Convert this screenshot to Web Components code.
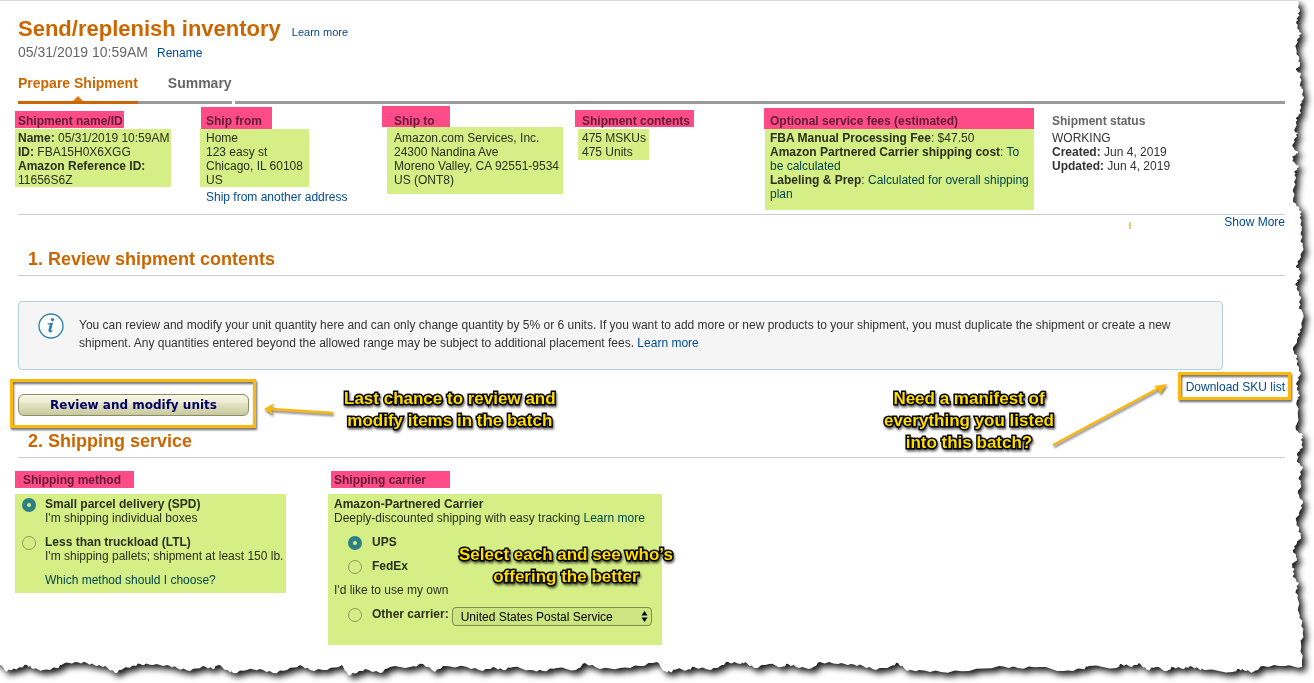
<!DOCTYPE html>
<html lang="en">
<head>
<meta charset="utf-8">
<meta name="viewport" content="width=device-width, initial-scale=1">
<title>Send/replenish inventory</title>
<style>
  body {
    margin: 0;
    background: #fff;
    color: #333;
    font: 12px/14px "Liberation Sans", Arial, sans-serif;
  }

  a {
    color: #004b91;
    text-decoration: none;
  }

  .name { --head-mark: -3px -1px 0 -3px; --body-mark: -2px -2px 0 -3px; }
  .from { --head-mark: -7px -10px -1px -5px; --body-mark: -2px -6px 0 -6px; }
  .to { --head-mark: -8px -15px 1px -12px; --body-mark: -4px -4px -7px -7px; }
  .contents { --head-mark: -4px -4px 1px -7px; --body-mark: -2px -3px -1px -4px; }
  .fees { --head-mark: -6px -76px -1px -6px; --body-mark: -2px 0 -9px -5px; }
</style>
</head>
<body>
<torn-page>
  <page-title>
    Send/replenish inventory
    <a slot="help" href="#">Learn more</a>
    <span slot="date">05/31/2019 10:59AM</span>
    <a slot="rename" href="#">Rename</a>
  </page-title>

  <tab-bar tabs="Prepare Shipment,Summary"></tab-bar>

  <shipment-summary>
    <info-cell class="name" marked>
      <span slot="head">Shipment name/ID</span>
      <b>Name:</b> 05/31/2019 10:59AM<br>
      <b>ID:</b> FBA15H0X6XGG<br>
      <b>Amazon Reference ID:</b><br>
      11656S6Z
    </info-cell>
    <info-cell class="from" marked>
      <span slot="head">Ship from</span>
      Home<br>123 easy st<br>Chicago, IL 60108<br>US
      <a slot="after" href="#">Ship from another address</a>
    </info-cell>
    <info-cell class="to" marked>
      <span slot="head">Ship to</span>
      Amazon.com Services, Inc.<br>24300 Nandina Ave<br>Moreno Valley, CA 92551-9534<br>US (ONT8)
    </info-cell>
    <info-cell class="contents" marked>
      <span slot="head">Shipment contents</span>
      475 MSKUs<br>475 Units
    </info-cell>
    <info-cell class="fees" marked>
      <span slot="head">Optional service fees (estimated)</span>
      <b>FBA Manual Processing Fee</b>: $47.50<br>
      <b>Amazon Partnered Carrier shipping cost</b>: <a href="#">To be calculated</a><br>
      <b>Labeling &amp; Prep</b>: <a href="#">Calculated for overall shipping plan</a>
    </info-cell>
    <info-cell>
      <span slot="head">Shipment status</span>
      WORKING<br>
      <b>Created:</b> Jun 4, 2019<br>
      <b>Updated:</b> Jun 4, 2019
    </info-cell>
    <a slot="more" href="#">Show More</a>
  </shipment-summary>

  <section-title>1. Review shipment contents</section-title>
  <info-alert>
    You can review and modify your unit quantity here and can only change quantity by 5% or 6 units. If you want to add more or new products to your shipment, you must duplicate the shipment or create a new shipment. Any quantities entered beyond the allowed range may be subject to additional placement fees. <a href="#">Learn more</a>
  </info-alert>
  <review-actions>
    <a slot="download" href="#">Download SKU list</a>
  </review-actions>

  <section-title>2. Shipping service</section-title>
  <shipping-service></shipping-service>
</torn-page>

<script>
// Sheet of paper with a ripped right and bottom edge
class TornPage extends HTMLElement {
  constructor() {
    super();
    this.attachShadow({mode: 'open'});
  }

  connectedCallback() {
    const right = [
      [1297, 0], [1300, 10], [1298, 17], [1296, 23], [1299, 30], [1301, 34], [1297, 40], [1296, 48], [1299, 60],
      [1300, 65], [1296, 70], [1301, 74], [1300, 86], [1303, 89], [1303, 100], [1300, 105], [1301, 113],
      [1297, 117], [1296, 123], [1295, 132], [1298, 133], [1294, 140], [1293, 147], [1298, 153], [1292, 157],
      [1294, 162], [1299, 167], [1294, 172], [1296, 177], [1294, 187], [1293, 202], [1299, 207], [1301, 213],
      [1300, 218], [1302, 227], [1301, 240], [1303, 247], [1301, 257], [1296, 266], [1300, 271], [1300, 278],
      [1296, 283], [1297, 290], [1301, 297], [1299, 307], [1303, 313], [1302, 327], [1299, 333], [1297, 340],
      [1293, 350], [1297, 357], [1297, 365], [1301, 373], [1297, 382], [1297, 390], [1300, 395], [1297, 400],
      [1298, 417], [1296, 430], [1303, 435], [1301, 440], [1303, 447], [1298, 452], [1297, 462], [1303, 467],
      [1299, 477], [1301, 485], [1298, 493], [1303, 503], [1299, 513], [1296, 520], [1299, 530], [1301, 537],
      [1297, 543], [1293, 550], [1297, 559], [1292, 565], [1294, 570], [1293, 577], [1299, 583], [1296, 590],
      [1298, 600], [1299, 613], [1302, 623], [1303, 635], [1301, 643], [1302, 660]
    ];
    const bottom = [
      [1302, 667], [1285, 666], [1263, 666], [1253, 672], [1246, 671], [1239, 669], [1233, 672], [1205, 670],
      [1199, 669], [1190, 666], [1184, 669], [1173, 667], [1167, 671], [1156, 667], [1147, 670], [1139, 663],
      [1132, 667], [1121, 664], [1117, 668], [1089, 666], [1083, 669], [1063, 671], [1040, 667], [1018, 668],
      [999, 666], [969, 671], [941, 672], [919, 670], [907, 671], [898, 663], [891, 666], [876, 670],
      [863, 666], [851, 664], [838, 664], [820, 662], [812, 668], [799, 668], [788, 664], [782, 667],
      [769, 664], [754, 668], [745, 662], [741, 664], [728, 662], [720, 666], [711, 670], [694, 667],
      [687, 670], [677, 669], [670, 672], [664, 671], [657, 662], [640, 666], [620, 668], [600, 669],
      [585, 663], [576, 670], [557, 668], [543, 671], [530, 670], [513, 667], [503, 670], [493, 667],
      [483, 671], [467, 667], [443, 666], [435, 672], [423, 664], [410, 667], [390, 667], [380, 673],
      [365, 669], [357, 673], [348, 675], [342, 665], [327, 670], [310, 670], [300, 665], [287, 670],
      [273, 673], [260, 669], [247, 670], [233, 673], [227, 670], [218, 665], [213, 669], [203, 666],
      [190, 671], [177, 668], [167, 665], [153, 665], [140, 664], [132, 666], [123, 669], [115, 673],
      [105, 666], [97, 666], [87, 663], [75, 662], [63, 664], [57, 668], [43, 670], [33, 669], [27, 665],
      [18, 668], [12, 670], [5, 671], [3, 667]
    ];
    const points = [[-12, 656], [-12, 0]].concat(this.fray(right, 0), this.fray(bottom, 1));

    this.shadowRoot.innerHTML = `
      <style>
        :host {
          display: block;
          position: relative;
          box-sizing: border-box;
          min-height: 100vh;
          padding: 16px 29px 38px 18px;
          overflow: hidden;
        }

        svg {
          position: absolute;
          inset: 0;
          width: 100%;
          height: 100%;
          z-index: -1;
        }

        polygon {
          fill: #fff;
          filter: drop-shadow(4px 4px 3px rgba(0, 0, 0, 0.9));
        }
      </style>
      <svg viewBox="0 0 1314 683" preserveAspectRatio="none" aria-hidden="true">
        <polygon points="${points.join(' ')}"/>
        <path d="M0 .5H1297" stroke="#d5d9d9"/>
      </svg>
      <slot></slot>
    `;
  }

  // adds small teeth between the main points of an edge
  fray(edge, axis) {
    const out = [];
    edge.forEach((p, i) => {
      out.push(p);
      const q = edge[i + 1];
      if (!q) return;
      for (let k = 1; k < 4; k++) {
        const tooth = [p[0] + (q[0] - p[0]) * k / 4, p[1] + (q[1] - p[1]) * k / 4];
        tooth[axis] += (i * 5 + k * 2) % 3 - 1;
        out.push(tooth);
      }
    });
    return out;
  }
}

class PageTitle extends HTMLElement {
  constructor() {
    super();
    this.attachShadow({mode: 'open'}).innerHTML = `
      <style>
        :host {
          display: block;
        }

        .row {
          display: flex;
          align-items: baseline;
          gap: 11px;
        }

        h1 {
          margin: 0;
          color: #cc6600;
          font-size: 22px;
          line-height: 26px;
        }

        .help {
          font-size: 11px;
        }

        .date {
          gap: 9px;
          color: #666;
          font-size: 14px;
          line-height: 20px;
        }

        .rename {
          font-size: 12px;
        }
      </style>
      <div class="row"><h1><slot></slot></h1><span class="help"><slot name="help"></slot></span></div>
      <div class="row date"><slot name="date"></slot><span class="rename"><slot name="rename"></slot></span></div>
    `;
  }
}

class TabBar extends HTMLElement {
  constructor() {
    super();
    this.attachShadow({mode: 'open'});
  }

  connectedCallback() {
    const tabs = this.getAttribute('tabs').split(',');
    this.shadowRoot.innerHTML = `
      <style>
        :host {
          display: block;
          margin-top: 11px;
        }

        nav {
          display: flex;
        }

        a {
          position: relative;
          padding: 0 0 9px 30px;
          border-bottom: 3px solid #999;
          color: #666;
          font-size: 14px;
          font-weight: bold;
          line-height: 18px;
          text-decoration: none;
        }

        a:first-child {
          padding-left: 0;
          border-color: #cc6600;
          color: #cc6600;
        }

        a:first-child::after {
          content: "";
          position: absolute;
          left: 50%;
          bottom: 0;
          margin-left: -5px;
          border: 5px solid transparent;
          border-top: 0;
          border-bottom-color: #e47911;
        }

        .rest {
          flex: 1;
          margin-left: 3px;
          border-bottom: 3px solid #999;
        }
      </style>
      <nav>${tabs.map(tab => `<a href="#">${tab}</a>`).join('')}<span class="rest"></span></nav>
    `;
  }
}

class ShipmentSummary extends HTMLElement {
  constructor() {
    super();
    this.attachShadow({mode: 'open'}).innerHTML = `
      <style>
        :host {
          display: block;
        }

        .cells {
          display: grid;
          grid-template-columns: repeat(4, 188fr) 282fr 233fr;
          padding: 10px 0;
          border-bottom: 1px solid #ccc;
        }

        .more {
          display: flex;
          justify-content: flex-end;
          gap: 92px;
        }

        svg {
          margin-top: 6px;
        }
      </style>
      <div class="cells"><slot></slot></div>
      <div class="more">
        <svg width="4" height="8" aria-hidden="true">
          <path d="M1 4h2v4h-2z" fill="#ccc"/><path d="M2 1l1 4h-2z" fill="#f7b011" stroke="#f7c95a"/>
        </svg>
        <slot name="more"></slot>
      </div>
    `;
  }
}

// Heading with text under it; "marked" paints both with a highlighter
class InfoCell extends HTMLElement {
  constructor() {
    super();
    this.attachShadow({mode: 'open'}).innerHTML = `
      <style>
        :host {
          display: block;
        }

        .head,
        .body {
          position: relative;
          width: fit-content;
        }

        .head {
          margin-bottom: 3px;
          color: #666;
          font-weight: bold;
        }

        .body {
          max-width: 264px;
        }

        :host([marked]) .head::after,
        :host([marked]) .body::after {
          content: "";
          position: absolute;
          inset: var(--head-mark);
          background: #ff4b88;
          mix-blend-mode: multiply;
          pointer-events: none;
        }

        :host([marked]) .body::after {
          inset: var(--body-mark);
          background: #d5ef86;
        }

        .after {
          margin-top: 3px;
        }
      </style>
      <div class="head"><slot name="head"></slot></div>
      <div class="body"><slot></slot></div>
      <div class="after"><slot name="after"></slot></div>
    `;
  }
}

class SectionTitle extends HTMLElement {
  constructor() {
    super();
    this.attachShadow({mode: 'open'}).innerHTML = `
      <style>
        :host {
          display: block;
          margin-top: 19px;
        }

        h2 {
          margin: 0;
          padding: 0 10px 5px;
          border-bottom: 1px solid #ccc;
          color: #cc6600;
          font-size: 18px;
          line-height: 22px;
        }
      </style>
      <h2><slot></slot></h2>
    `;
  }
}

class InfoAlert extends HTMLElement {
  constructor() {
    super();
    this.attachShadow({mode: 'open'}).innerHTML = `
      <style>
        :host {
          display: flex;
          align-items: flex-start;
          gap: 15px;
          margin: 25px 62px 0 0;
          padding: 14px 19px 17px;
          border: 1px solid #b3d0db;
          border-radius: 4px;
          background: #f5f5f5;
          line-height: 18px;
        }

        svg {
          flex: none;
          margin-top: -3px;
        }
      </style>
      <svg width="26" height="26" viewBox="0 0 26 26" aria-hidden="true">
        <circle cx="13" cy="13" r="12" fill="#fff" stroke="#2f86ad" stroke-width="1.4"/>
        <circle cx="14.5" cy="6.6" r="1.7" fill="#2f86ad"/>
        <path d="M9.6 11.1l4.6-.8-2.2 8.4c-.1.7.6.4 2.2-1.2" fill="none" stroke="#2f86ad" stroke-width="1.3"/>
        <path d="M13.3 10.3l-2 8.2" stroke="#2f86ad" stroke-width="2.4"/>
      </svg>
      <div><slot></slot></div>
    `;
  }
}

// Yellow outlined note
class CallOut extends HTMLElement {
  constructor() {
    super();
    this.attachShadow({mode: 'open'}).innerHTML = `
      <style>
        :host {
          display: block;
          color: #ffdd00;
          font-size: 17px;
          font-weight: bold;
          line-height: 22px;
          text-align: center;
          white-space: nowrap;
          -webkit-text-stroke: 3px #000;
          paint-order: stroke fill;
          filter: drop-shadow(1px 2px 1px rgba(0, 0, 0, 0.6));
        }
      </style>
      <slot></slot>
    `;
  }
}

class ReviewActions extends HTMLElement {
  constructor() {
    super();
    this.attachShadow({mode: 'open'}).innerHTML = `
      <style>
        :host {
          display: flex;
          position: relative;
          justify-content: space-between;
          align-items: flex-start;
          padding-top: 10px;
          margin-bottom: -5px;
        }

        .boxed {
          position: relative;
        }

        .boxed::after {
          content: "";
          position: absolute;
          inset: -15px -7px -12px -8px;
          border: 3px solid #fbb811;
          filter: drop-shadow(1px 2px 1px rgba(0, 0, 0, 0.6));
          pointer-events: none;
        }

        .review {
          margin-top: 14px;
        }

        .download::after {
          inset: -8px -6px -6px -8px;
        }

        button {
          display: block;
          width: 231px;
          height: 22px;
          padding: 0;
          border: 1px solid #8d8d63;
          border-radius: 6px;
          background: linear-gradient(#f6f6e4, #eeeed6 35%, #e3e3c2 45%, #c8c8a0);
          color: #000066;
          font: bold 12px "DejaVu Sans", Verdana, sans-serif;
        }

        call-out,
        .arrow {
          position: absolute;
        }

        .arrow {
          fill: none;
          stroke: #f9b70f;
          stroke-width: 2.5;
          filter: drop-shadow(1px 2px 1px rgba(0, 0, 0, 0.5));
          overflow: visible;
        }

        .arrow .tip {
          fill: #f9b70f;
          stroke: none;
        }

        .chance { left: 326px; top: 18px; }
        .chance-arrow { left: 246px; top: 33px; }
        .manifest { right: 231px; top: 18px; }
        .manifest-arrow { right: 118px; top: 14px; }
      </style>
      <div class="boxed review"><button type="button">Review and modify units</button></div>
      <div class="boxed download"><slot name="download"></slot></div>

      <svg class="arrow chance-arrow" width="70" height="14" aria-hidden="true">
        <path d="M69 10L7 6"/><path class="tip" d="M0 6L10 0L7 6L9 12z"/>
      </svg>
      <call-out class="chance">Last chance to review and<br>modify items in the batch</call-out>
      <call-out class="manifest">Need a manifest of<br>everything you listed<br>into this batch?</call-out>
      <svg class="arrow manifest-arrow" width="114" height="62" aria-hidden="true">
        <path d="M0 61L106 4"/><path class="tip" d="M114 0L107 10L105 5L101 2z"/>
      </svg>
    `;
  }
}

class ShippingService extends HTMLElement {
  constructor() {
    super();
    this.attachShadow({mode: 'open'}).innerHTML = `
      <style>
        :host {
          display: grid;
          grid-template-columns: 316px 1fr;
          padding-top: 15px;
        }

        h3 {
          position: relative;
          width: 111px;
          margin: 0 0 10px;
          padding-left: 5px;
          color: #666;
          font-size: 12px;
          line-height: 14px;
        }

        .carrier h3 {
          width: 116px;
          padding-left: 0;
        }

        h3::after,
        .options::after {
          content: "";
          position: absolute;
          inset: -2px 0 -1px -3px;
          background: #ff4b88;
          mix-blend-mode: multiply;
          pointer-events: none;
        }

        .options {
          display: flex;
          position: relative;
          flex-direction: column;
          gap: 10px;
          width: fit-content;
        }

        .method .options::after {
          inset: -3px -3px -6px -3px;
          background: #d5ef86;
        }

        .carrier .options::after {
          inset: -3px -10px -19px -6px;
          background: #d5ef86;
        }

        .option {
          display: flex;
          gap: 9px;
          padding-left: 4px;
        }

        .carrier .option {
          gap: 10px;
          padding-left: 14px;
        }

        label b {
          display: block;
        }

        input {
          flex: none;
          box-sizing: border-box;
          width: 14px;
          height: 14px;
          margin: 1px 0 -1px;
          appearance: none;
          border: 1px solid #aaa;
          border-radius: 50%;
        }

        input:checked {
          border: 5px solid #3787fa;
        }

        .which {
          margin-left: 27px;
        }

        a {
          color: #004b91;
          text-decoration: none;
        }

        .own {
          margin: 0;
        }

        .select {
          display: flex;
          position: relative;
          margin-left: -7px;
        }

        select {
          width: 200px;
          height: 19px;
          padding: 0 8px;
          appearance: none;
          border: 1px solid #999;
          border-radius: 4px;
          background: #f5f5f5;
          color: #000;
          font: 12px "Liberation Sans", Arial, sans-serif;
        }

        .select svg {
          position: absolute;
          right: 4px;
          top: 4px;
          pointer-events: none;
        }

        .carrier {
          position: relative;
        }

        call-out {
          position: absolute;
          left: 125px;
          top: 71px;
        }
      </style>
      <section class="method">
        <h3>Shipping method</h3>
        <div class="options">
          <div class="option">
            <input type="radio" name="method" id="spd" checked>
            <label for="spd"><b>Small parcel delivery (SPD)</b>I'm shipping individual boxes</label>
          </div>
          <div class="option">
            <input type="radio" name="method" id="ltl">
            <label for="ltl"><b>Less than truckload (LTL)</b>I'm shipping pallets; shipment at least 150 lb.</label>
          </div>
          <a class="which" href="#">Which method should I choose?</a>
        </div>
      </section>
      <section class="carrier">
        <h3>Shipping carrier</h3>
        <div class="options">
          <div><b>Amazon-Partnered Carrier</b><br>Deeply-discounted shipping with easy tracking <a href="#">Learn more</a></div>
          <div class="option">
            <input type="radio" name="carrier" id="ups" checked>
            <label for="ups"><b>UPS</b></label>
          </div>
          <div class="option">
            <input type="radio" name="carrier" id="fedex">
            <label for="fedex"><b>FedEx</b></label>
          </div>
          <p class="own">I'd like to use my own</p>
          <div class="option other">
            <input type="radio" name="carrier" id="other">
            <label for="other"><b>Other carrier:</b></label>
            <div class="select">
              <select aria-label="Other carrier"><option>United States Postal Service</option></select>
              <svg width="7" height="11" aria-hidden="true"><path d="M3.5 0L6.5 4.5h-6zM3.5 11L.5 6.5h6z"/></svg>
            </div>
          </div>
        </div>
        <call-out>Select each and see who’s<br>offering the better</call-out>
      </section>
    `;
  }
}

customElements.define('torn-page', TornPage);
customElements.define('page-title', PageTitle);
customElements.define('tab-bar', TabBar);
customElements.define('shipment-summary', ShipmentSummary);
customElements.define('info-cell', InfoCell);
customElements.define('section-title', SectionTitle);
customElements.define('info-alert', InfoAlert);
customElements.define('call-out', CallOut);
customElements.define('review-actions', ReviewActions);
customElements.define('shipping-service', ShippingService);
</script>
</body>
</html>
